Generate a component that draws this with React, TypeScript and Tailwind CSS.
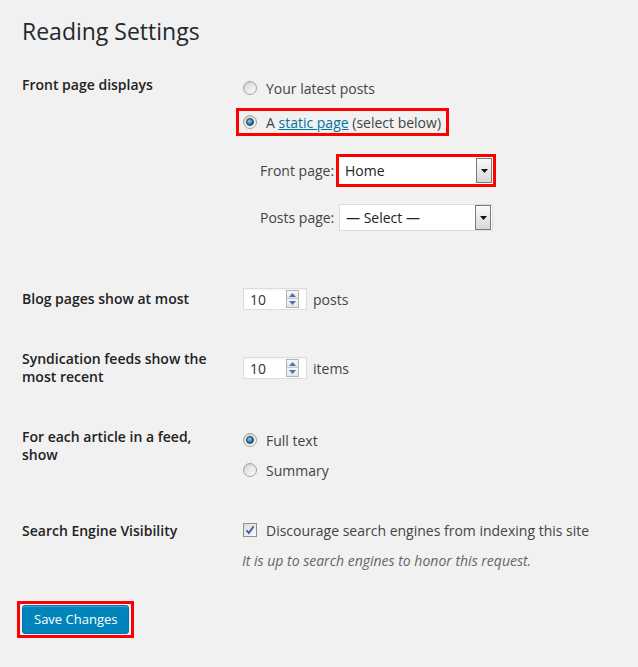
import React from 'react';

const Radio = ({ checked }: { checked?: boolean }) => (
  <span className="flex h-[14px] w-[14px] shrink-0 items-center justify-center rounded-full border border-[#a3a3a3] bg-gradient-to-br from-[#d6d6d6] to-[#fdfdfd] shadow-[inset_0_1px_1px_rgba(0,0,0,0.08)]">
    {checked && (
      <span className="h-[8px] w-[8px] rounded-full border border-[#2b3b4b] bg-[radial-gradient(circle_at_40%_35%,#8fd0f5,#1f7fbf_55%,#0c4470)]" />
    )}
  </span>
);

const Checkbox = () => (
  <span className="flex h-[14px] w-[14px] shrink-0 items-center justify-center border border-[#8f8f8f] bg-gradient-to-br from-[#dcdcdc] to-[#fafafa]">
    <svg width="10" height="10" viewBox="0 0 10 10">
      <path d="M1.5 5.2 L3.8 8 L8.6 1.4" fill="none" stroke="#3d5aa8" strokeWidth="1.8" />
    </svg>
  </span>
);

const SelectBox = ({ value }: { value: string }) => (
  <div className="flex h-[27px] w-[154px] items-center justify-between border border-[#dcdcdc] bg-white pl-[6px] pr-[1px]">
    <span className="text-[14px] text-[#222]">{value}</span>
    <span className="flex h-[25px] w-[16px] items-center justify-center border border-[#7a7a7a] bg-gradient-to-b from-[#fafafa] to-[#d8d8d8]">
      <svg width="7" height="4" viewBox="0 0 7 4">
        <path d="M0 0 H7 L3.5 4 Z" fill="#111" />
      </svg>
    </span>
  </div>
);

const NumberInput = () => (
  <div className="flex h-[22px] w-[64px] items-center justify-between border border-[#dddddd] bg-white pl-[6px] pr-[7px] shadow-[inset_0_1px_2px_rgba(0,0,0,0.05)]">
    <span className="text-[14px] text-[#333]">10</span>
    <span className="flex w-[13px] flex-col border border-[#b5b5b5]">
      <span className="flex h-[8px] items-center justify-center border-b border-[#c8c8c8] bg-gradient-to-b from-[#f7f7f7] to-[#e4e4e4]">
        <svg width="7" height="4" viewBox="0 0 7 4">
          <path d="M0 4 H7 L3.5 0 Z" fill="#4c6fc0" />
        </svg>
      </span>
      <span className="flex h-[8px] items-center justify-center bg-gradient-to-b from-[#f7f7f7] to-[#e4e4e4]">
        <svg width="7" height="4" viewBox="0 0 7 4">
          <path d="M0 0 H7 L3.5 4 Z" fill="#4c6fc0" />
        </svg>
      </span>
    </span>
  </div>
);

export default function App() {
  return (
    <div className="min-h-[667px] w-[638px] bg-[#f1f1f1] pl-[22px] font-['Open_Sans',sans-serif] text-[14px] text-[#444]">
      <h1 className="pt-[17px] text-[23px] leading-[29px] font-normal text-[#23282d]">Reading Settings</h1>

      {/* Front page displays */}
      <div className="mt-[30px] flex">
        <div className="w-[221px] shrink-0 leading-[18px] font-semibold text-[#222]">Front page displays</div>
        <div className="pt-[1px]">
          <div className="flex h-[22px] items-center gap-[9px]">
            <Radio />
            <span>Your latest posts</span>
          </div>
          <div className="mt-[9px] -ml-[7px] flex h-[28px] w-[213px] items-center gap-[9px] border-[3px] border-[#ff0000] pl-[4px]">
            <Radio checked />
            <span>
              A <span className="text-[#0074a2] underline">static page</span> (select below)
            </span>
          </div>
          <div className="pl-[17px]">
            <div className="mt-[18px] flex h-[33px] items-center">
              <span className="w-[76px]">Front page:</span>
              <div className="border-[3px] border-[#ff0000] [&>div]:border-0">
                <SelectBox value="Home" />
              </div>
            </div>
            <div className="mt-[17px] flex h-[27px] items-center">
              <span className="w-[79px]">Posts page:</span>
              <SelectBox value="— Select —" />
            </div>
          </div>
        </div>
      </div>

      {/* Blog pages */}
      <div className="mt-[57px] flex">
        <div className="w-[221px] shrink-0 pt-[2px] leading-[18px] font-semibold text-[#222]">Blog pages show at most</div>
        <div className="flex items-center gap-[6px]">
          <NumberInput />
          <span>posts</span>
        </div>
      </div>

      {/* Syndication */}
      <div className="mt-[40px] flex">
        <div className="w-[221px] shrink-0 pr-[10px] leading-[18px] font-semibold text-[#222]">
          Syndication feeds show the most recent
        </div>
        <div className="mt-[7px] flex h-[22px] items-center gap-[6px]">
          <NumberInput />
          <span>items</span>
        </div>
      </div>

      {/* For each article */}
      <div className="mt-[42px] flex">
        <div className="w-[221px] shrink-0 pr-[16px] leading-[18px] font-semibold text-[#222]">
          For each article in a feed, show
        </div>
        <div className="pt-[1px]">
          <div className="flex h-[22px] items-center gap-[9px]">
            <Radio checked />
            <span>Full text</span>
          </div>
          <div className="mt-[8px] flex h-[22px] items-center gap-[9px]">
            <Radio />
            <span>Summary</span>
          </div>
        </div>
      </div>

      {/* Search engine */}
      <div className="mt-[38px] flex">
        <div className="w-[221px] shrink-0 pt-[3px] leading-[18px] font-semibold text-[#222]">Search Engine Visibility</div>
        <div>
          <div className="flex h-[22px] items-center gap-[9px]">
            <Checkbox />
            <span>Discourage search engines from indexing this site</span>
          </div>
          <p className="mt-[10px] -ml-[1px] leading-[20px] text-[#666] italic">It is up to search engines to honor this request.</p>
        </div>
      </div>

      <div className="mt-[30px] -ml-[5px] inline-flex border-[3px] border-[#ff0000] py-[1px] pr-[2px] pl-[2px]">
        <button className="h-[29px] rounded-[3px] border border-[#0073aa] bg-[#0085ba] px-[11px] text-[13px] text-white shadow-[inset_0_1px_0_rgba(120,200,230,0.5)]">
          Save Changes
        </button>
      </div>
    </div>
  );
}
